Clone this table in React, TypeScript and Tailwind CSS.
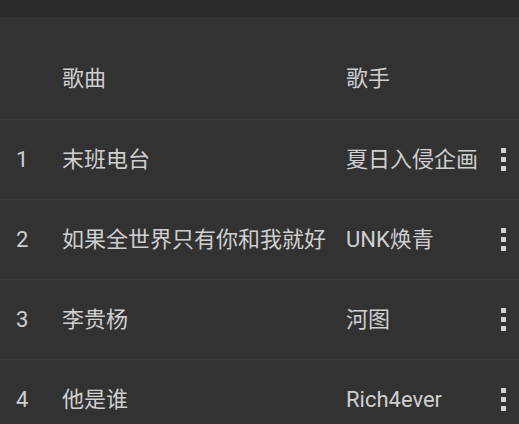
import React from 'react';

const songs = [
  { no: 1, title: '末班电台', artist: '夏日入侵企画' },
  { no: 2, title: '如果全世界只有你和我就好', artist: 'UNK焕青' },
  { no: 3, title: '李贵杨', artist: '河图' },
  { no: 4, title: '他是谁', artist: 'Rich4ever' },
];

const MoreDots = () => (
  <div className="flex flex-col gap-[4px]">
    <span className="block w-[5px] h-[5px] bg-[#d2d2d2]" />
    <span className="block w-[5px] h-[5px] bg-[#d2d2d2]" />
    <span className="block w-[5px] h-[5px] bg-[#d2d2d2]" />
  </div>
);

export default function App() {
  return (
    <div
      className="w-[519px] h-[424px] overflow-hidden bg-[#323232] text-[#cfcfcf] text-[22px]"
      style={{ fontFamily: 'Roboto, "Noto Sans CJK SC", sans-serif' }}
    >
      <div className="h-[17px] bg-[#2b2b2b]" />
      <div className="flex items-center h-[103px] pt-[20px] border-b border-[#3b3b3b]">
        <div className="w-[62px]" />
        <div className="w-[284px]">歌曲</div>
        <div>歌手</div>
      </div>
      {songs.map((s) => (
        <div key={s.no} className="flex items-center h-[80px] border-b border-[#3b3b3b]">
          <div className="w-[62px] pl-[16px]">{s.no}</div>
          <div className="w-[284px] whitespace-nowrap">{s.title}</div>
          <div className="flex-1 whitespace-nowrap">{s.artist}</div>
          <div className="w-[18px] flex justify-start">
            <MoreDots />
          </div>
        </div>
      ))}
    </div>
  );
}
